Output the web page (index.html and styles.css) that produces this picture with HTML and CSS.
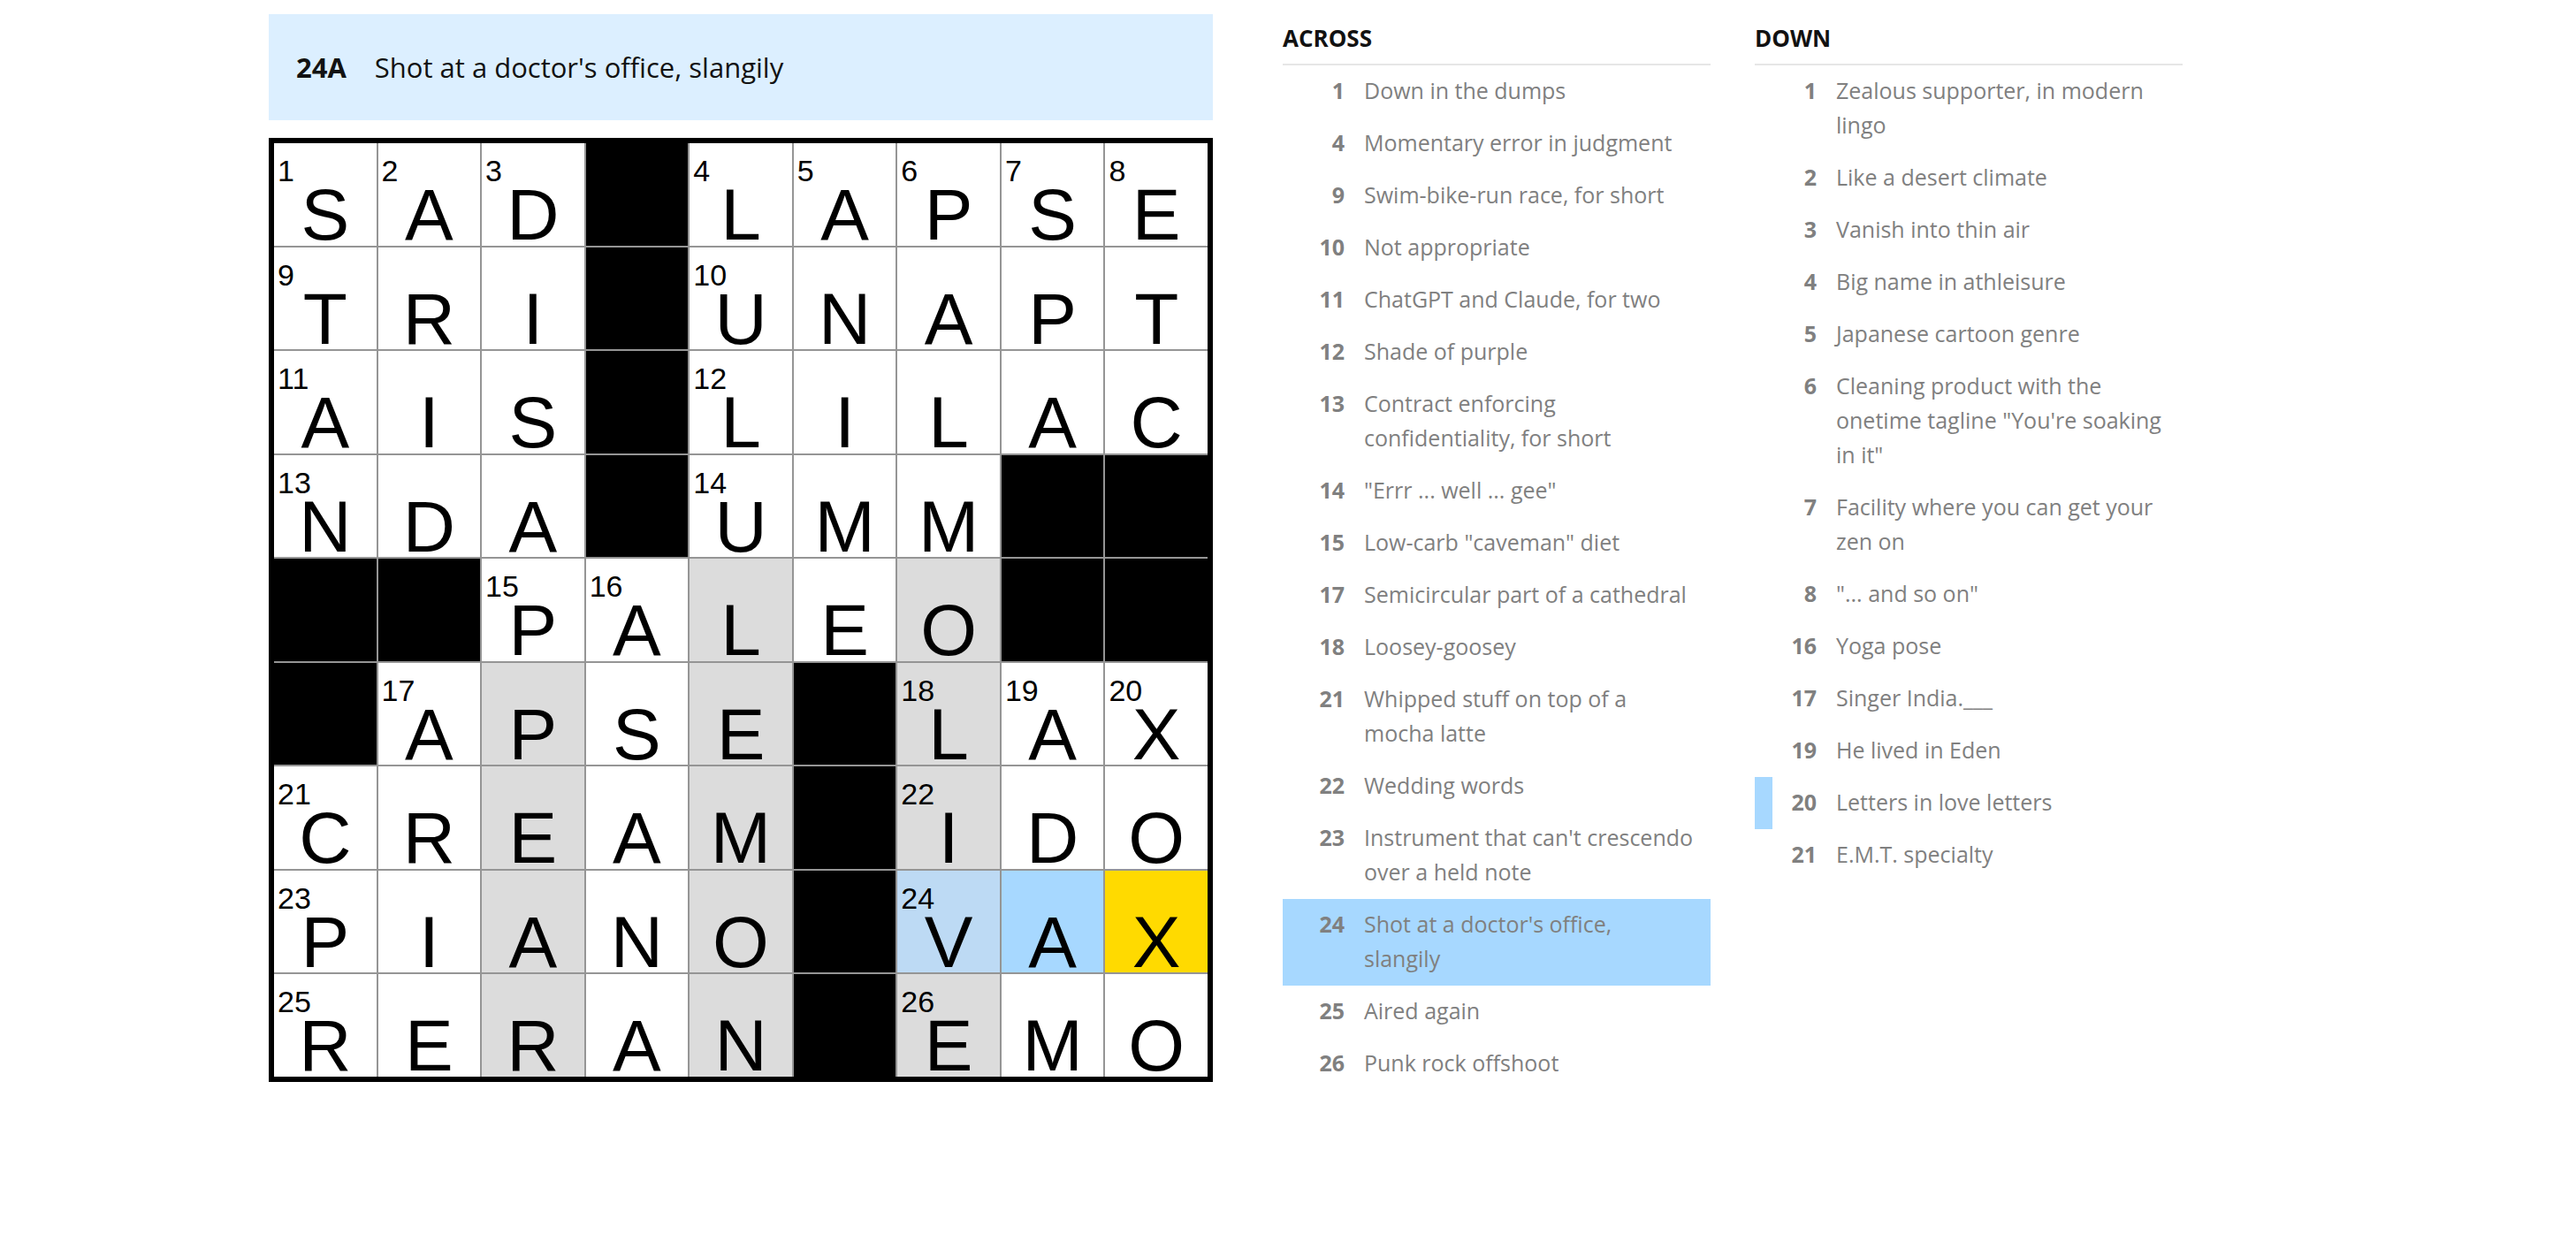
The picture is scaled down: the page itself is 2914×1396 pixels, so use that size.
FILE: index.html
```html
<!DOCTYPE html>
<html lang="en">
<head>
    <meta charset="UTF-8">
    <meta name="viewport" content="width=device-width, initial-scale=1.0">
    <title>Crossword</title>
    <link rel="stylesheet" href="styles.css">
</head>
<body>
    <div class="layout">
        <!-- board: current clue + grid -->
        <div class="board">
            <div class="clue-bar">
                <span class="clue-bar-label">24A</span>
                <span class="clue-bar-text">Shot at a doctor's office, slangily</span>
            </div>

            <div class="grid">
                <!-- row 1 -->
                <div class="cell"><span class="num">1</span><span class="letter">S</span></div>
                <div class="cell"><span class="num">2</span><span class="letter">A</span></div>
                <div class="cell"><span class="num">3</span><span class="letter">D</span></div>
                <div class="cell block"></div>
                <div class="cell"><span class="num">4</span><span class="letter">L</span></div>
                <div class="cell"><span class="num">5</span><span class="letter">A</span></div>
                <div class="cell"><span class="num">6</span><span class="letter">P</span></div>
                <div class="cell"><span class="num">7</span><span class="letter">S</span></div>
                <div class="cell"><span class="num">8</span><span class="letter">E</span></div>
                <!-- row 2 -->
                <div class="cell"><span class="num">9</span><span class="letter">T</span></div>
                <div class="cell"><span class="letter">R</span></div>
                <div class="cell"><span class="letter">I</span></div>
                <div class="cell block"></div>
                <div class="cell"><span class="num">10</span><span class="letter">U</span></div>
                <div class="cell"><span class="letter">N</span></div>
                <div class="cell"><span class="letter">A</span></div>
                <div class="cell"><span class="letter">P</span></div>
                <div class="cell"><span class="letter">T</span></div>
                <!-- row 3 -->
                <div class="cell"><span class="num">11</span><span class="letter">A</span></div>
                <div class="cell"><span class="letter">I</span></div>
                <div class="cell"><span class="letter">S</span></div>
                <div class="cell block"></div>
                <div class="cell"><span class="num">12</span><span class="letter">L</span></div>
                <div class="cell"><span class="letter">I</span></div>
                <div class="cell"><span class="letter">L</span></div>
                <div class="cell"><span class="letter">A</span></div>
                <div class="cell"><span class="letter">C</span></div>
                <!-- row 4 -->
                <div class="cell"><span class="num">13</span><span class="letter">N</span></div>
                <div class="cell"><span class="letter">D</span></div>
                <div class="cell"><span class="letter">A</span></div>
                <div class="cell block"></div>
                <div class="cell"><span class="num">14</span><span class="letter">U</span></div>
                <div class="cell"><span class="letter">M</span></div>
                <div class="cell"><span class="letter">M</span></div>
                <div class="cell block"></div>
                <div class="cell block"></div>
                <!-- row 5 -->
                <div class="cell block"></div>
                <div class="cell block"></div>
                <div class="cell"><span class="num">15</span><span class="letter">P</span></div>
                <div class="cell"><span class="num">16</span><span class="letter">A</span></div>
                <div class="cell shaded"><span class="letter">L</span></div>
                <div class="cell"><span class="letter">E</span></div>
                <div class="cell shaded"><span class="letter">O</span></div>
                <div class="cell block"></div>
                <div class="cell block"></div>
                <!-- row 6 -->
                <div class="cell block"></div>
                <div class="cell"><span class="num">17</span><span class="letter">A</span></div>
                <div class="cell shaded"><span class="letter">P</span></div>
                <div class="cell"><span class="letter">S</span></div>
                <div class="cell shaded"><span class="letter">E</span></div>
                <div class="cell block"></div>
                <div class="cell shaded"><span class="num">18</span><span class="letter">L</span></div>
                <div class="cell"><span class="num">19</span><span class="letter">A</span></div>
                <div class="cell"><span class="num">20</span><span class="letter">X</span></div>
                <!-- row 7 -->
                <div class="cell"><span class="num">21</span><span class="letter">C</span></div>
                <div class="cell"><span class="letter">R</span></div>
                <div class="cell shaded"><span class="letter">E</span></div>
                <div class="cell"><span class="letter">A</span></div>
                <div class="cell shaded"><span class="letter">M</span></div>
                <div class="cell block"></div>
                <div class="cell shaded"><span class="num">22</span><span class="letter">I</span></div>
                <div class="cell"><span class="letter">D</span></div>
                <div class="cell"><span class="letter">O</span></div>
                <!-- row 8 -->
                <div class="cell"><span class="num">23</span><span class="letter">P</span></div>
                <div class="cell"><span class="letter">I</span></div>
                <div class="cell shaded"><span class="letter">A</span></div>
                <div class="cell"><span class="letter">N</span></div>
                <div class="cell shaded"><span class="letter">O</span></div>
                <div class="cell block"></div>
                <div class="cell word shaded"><span class="num">24</span><span class="letter">V</span></div>
                <div class="cell word"><span class="letter">A</span></div>
                <div class="cell active"><span class="letter">X</span></div>
                <!-- row 9 -->
                <div class="cell"><span class="num">25</span><span class="letter">R</span></div>
                <div class="cell"><span class="letter">E</span></div>
                <div class="cell shaded"><span class="letter">R</span></div>
                <div class="cell"><span class="letter">A</span></div>
                <div class="cell shaded"><span class="letter">N</span></div>
                <div class="cell block"></div>
                <div class="cell shaded"><span class="num">26</span><span class="letter">E</span></div>
                <div class="cell"><span class="letter">M</span></div>
                <div class="cell"><span class="letter">O</span></div>
            </div>
        </div>

        <!-- clue lists -->
        <div class="clue-lists">
            <section class="clue-list">
                <h3 class="clue-list-title">Across</h3>
                <ol>
                    <li class="clue"><span class="clue-num">1</span><span class="clue-text">Down in the dumps</span></li>
                    <li class="clue"><span class="clue-num">4</span><span class="clue-text">Momentary error in judgment</span></li>
                    <li class="clue"><span class="clue-num">9</span><span class="clue-text">Swim-bike-run race, for short</span></li>
                    <li class="clue"><span class="clue-num">10</span><span class="clue-text">Not appropriate</span></li>
                    <li class="clue"><span class="clue-num">11</span><span class="clue-text">ChatGPT and Claude, for two</span></li>
                    <li class="clue"><span class="clue-num">12</span><span class="clue-text">Shade of purple</span></li>
                    <li class="clue"><span class="clue-num">13</span><span class="clue-text">Contract enforcing confidentiality, for short</span></li>
                    <li class="clue"><span class="clue-num">14</span><span class="clue-text">"Errr ... well ... gee"</span></li>
                    <li class="clue"><span class="clue-num">15</span><span class="clue-text">Low-carb "caveman" diet</span></li>
                    <li class="clue"><span class="clue-num">17</span><span class="clue-text">Semicircular part of a cathedral</span></li>
                    <li class="clue"><span class="clue-num">18</span><span class="clue-text">Loosey-goosey</span></li>
                    <li class="clue"><span class="clue-num">21</span><span class="clue-text">Whipped stuff on top of a mocha latte</span></li>
                    <li class="clue"><span class="clue-num">22</span><span class="clue-text">Wedding words</span></li>
                    <li class="clue"><span class="clue-num">23</span><span class="clue-text">Instrument that can't crescendo over a held note</span></li>
                    <li class="clue selected"><span class="clue-num">24</span><span class="clue-text">Shot at a doctor's office,<br>slangily</span></li>
                    <li class="clue"><span class="clue-num">25</span><span class="clue-text">Aired again</span></li>
                    <li class="clue"><span class="clue-num">26</span><span class="clue-text">Punk rock offshoot</span></li>
                </ol>
            </section>

            <section class="clue-list">
                <h3 class="clue-list-title">Down</h3>
                <ol>
                    <li class="clue"><span class="clue-num">1</span><span class="clue-text">Zealous supporter, in modern lingo</span></li>
                    <li class="clue"><span class="clue-num">2</span><span class="clue-text">Like a desert climate</span></li>
                    <li class="clue"><span class="clue-num">3</span><span class="clue-text">Vanish into thin air</span></li>
                    <li class="clue"><span class="clue-num">4</span><span class="clue-text">Big name in athleisure</span></li>
                    <li class="clue"><span class="clue-num">5</span><span class="clue-text">Japanese cartoon genre</span></li>
                    <li class="clue"><span class="clue-num">6</span><span class="clue-text">Cleaning product with the onetime tagline "You're soaking in it"</span></li>
                    <li class="clue"><span class="clue-num">7</span><span class="clue-text">Facility where you can get your zen on</span></li>
                    <li class="clue"><span class="clue-num">8</span><span class="clue-text">"... and so on"</span></li>
                    <li class="clue"><span class="clue-num">16</span><span class="clue-text">Yoga pose</span></li>
                    <li class="clue"><span class="clue-num">17</span><span class="clue-text">Singer India.___</span></li>
                    <li class="clue"><span class="clue-num">19</span><span class="clue-text">He lived in Eden</span></li>
                    <li class="clue crossing"><span class="clue-num">20</span><span class="clue-text">Letters in love letters</span></li>
                    <li class="clue"><span class="clue-num">21</span><span class="clue-text">E.M.T. specialty</span></li>
                </ol>
            </section>
        </div>
    </div>
</body>
</html>
```

FILE: styles.css
```css
body {
    margin: 0;
    background: #fff;
    color: #121212;
    font-family: "Open Sans", Arial, sans-serif;
}

.layout {
    display: flex;
    align-items: flex-start;
    padding: 16px 0 0 304px;
}

/* current clue + grid */
.board {
    width: 1068px;
    flex: none;
}

.clue-bar {
    box-sizing: border-box;
    height: 120px;
    margin-bottom: 20px;
    padding-left: 31px;
    display: flex;
    align-items: center;
    background-color: #dcefff;
    font-size: 31px;
}

.clue-bar-label {
    font-weight: 700;
    margin-right: 32px;
}

.grid {
    box-sizing: border-box;
    width: 1068px;
    height: 1068px;
    display: grid;
    grid-template-columns: repeat(9, minmax(0, 1fr));
    grid-template-rows: repeat(9, minmax(0, 1fr));
    gap: 2px;
    background-color: #959595;
    border: 6px solid #000;
}

.cell {
    position: relative;
    display: flex;
    justify-content: center;
    background-color: #fff;
    font-family: "Liberation Sans", Arial, sans-serif;
    color: #000;
}

.cell.block {
    background-color: #000;
}

.cell.shaded {
    background-color: #dcdcdc;
}

.cell.word {
    background-color: #a7d8ff;
}

.cell.word.shaded {
    background-color: #bddaf4;
}

.cell.active {
    background-color: #ffda00;
}

.cell .num {
    position: absolute;
    left: 4px;
    top: 14px;
    font-size: 34px;
    line-height: 1;
}

.cell .letter {
    margin-top: 51px;
    font-size: 82px;
    line-height: 60px;
}

/* clue lists */
.clue-lists {
    display: flex;
    gap: 50px;
    margin-left: 79px;
}

.clue-list {
    width: 484px;
}

.clue-list-title {
    margin: 0;
    padding: 12px 0 14px;
    font-size: 26px;
    line-height: 30px;
    font-weight: 700;
    text-transform: uppercase;
    border-bottom: 2px solid #e6e6e6;
}

.clue-list ol {
    list-style: none;
    margin: 0;
    padding: 0;
}

.clue {
    display: flex;
    padding: 9px 14px 11px 0;
    border-left: 20px solid transparent;
    font-size: 25px;
    line-height: 39px;
    color: #808080;
}

.clue-num {
    flex: none;
    width: 50px;
    margin-right: 22px;
    text-align: right;
    font-weight: 700;
}

.clue-text {
    flex: 1;
}

.clue.selected {
    background-color: #a7d8ff;
}

.clue.crossing {
    border-left-color: #a7d8ff;
}
```
